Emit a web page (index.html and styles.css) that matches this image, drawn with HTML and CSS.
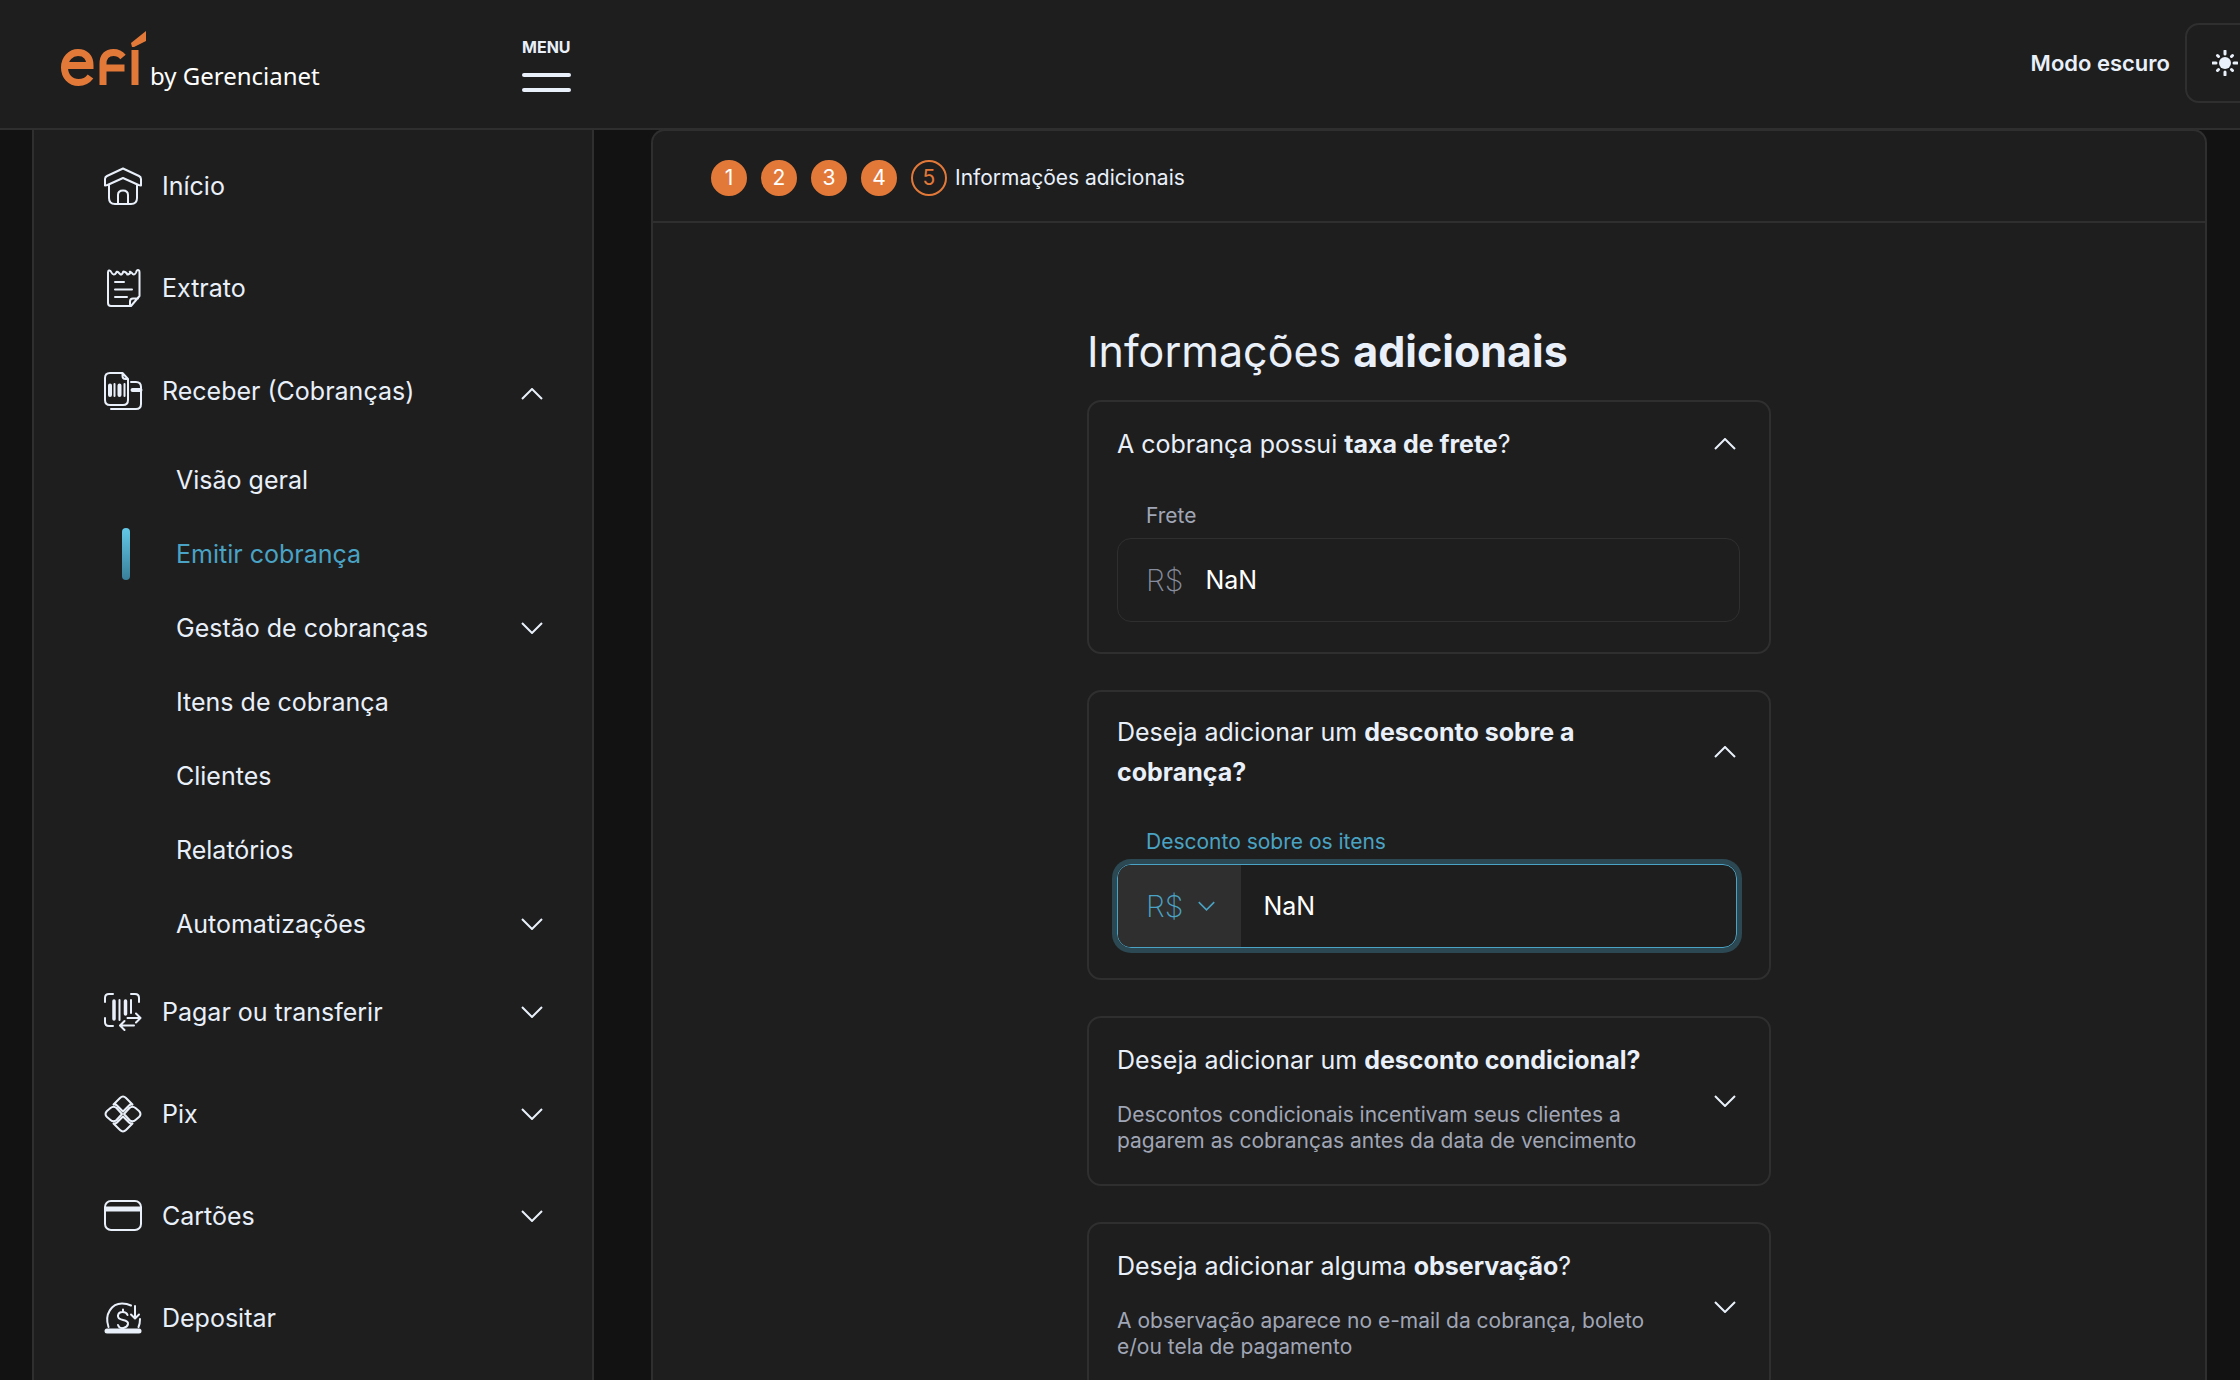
FILE: index.html
```html
<!DOCTYPE html>
<html lang="pt-BR">
<head>
<meta charset="utf-8">
<meta name="viewport" content="width=device-width, initial-scale=1">
<title>Emitir cobrança - Informações adicionais</title>
<link rel="stylesheet" href="styles.css">
</head>
<body>
<svg class="defs" aria-hidden="true">
  <symbol id="down" viewBox="0 0 22 12"><path d="M1 1l10 10L21 1" fill="none" stroke="currentColor" stroke-width="2"/></symbol>
  <symbol id="up" viewBox="0 0 22 12"><path d="M1 11L11 1l10 10" fill="none" stroke="currentColor" stroke-width="2"/></symbol>
</svg>
<div class="app">
  <header class="topbar">
    <a class="brand" href="#" aria-label="Efí by Gerencianet">
      <svg class="brand-mark" viewBox="0 0 86 56" aria-hidden="true">
        <g fill="none" stroke="#e37939" stroke-width="7">
          <path d="M3.500 34.500H29C29 26 24 21.500 17 21.500S3.500 27.500 3.500 36.500 9.500 51.500 17.500 51.500c5.500 0 9-2 12-6"/>
          <path d="M42 54V33c0-8 4-11.500 10.500-11.500 4.500 0 7 1.500 9.500 4.500M42 37h21.500M74 54V19"/>
        </g>
        <path fill="#e37939" d="M71 16 70 12 85 0V10L73 16Z"/>
      </svg>
      <span class="brand-text">by Gerencianet</span>
    </a>
    <button class="menu" type="button"><span>MENU</span><i></i><i></i></button>
    <div class="theme">
      <span id="theme-label">Modo escuro</span>
      <button class="theme-toggle" type="button" aria-labelledby="theme-label">
        <svg width="26" height="26" viewBox="0 0 26 26"><circle cx="13" cy="13" r="6" fill="currentColor"/><path d="M13 1v3M13 22v3M1 13h3M22 13h3M5.500 5.500l1 1M19.500 19.500l1 1M5.500 20.500l1-1M19.500 6.500l1-1" stroke="currentColor" stroke-width="3" stroke-linecap="round"/></svg>
      </button>
    </div>
  </header>

  <div class="body">
    <nav class="sidebar">
      <ul>
        <li><a class="item" href="#">
          <svg class="icon" viewBox="0 0 38 38"><path d="M19 1.500 35 9q2 1 2 3v6.500l-2.500-.5L19 11 3.500 18 1 18.500V12q0-2 2-3zM5 18v13q0 6 6 6h16q6 0 6-6V18M14 37V28q0-4.500 5-4.500t5 4.500v9"/></svg>
          <span>Início</span></a></li>
        <li><a class="item" href="#">
          <svg class="icon" viewBox="0 0 38 38"><path d="M5 1.500q1.500-.5 2.500 2C8.500 6 11 6 12 4q1-2 2-1t2 2 2 0 1-2 2 0 2 2 2 0 1-2 2 1c1 2 3 2 4-.5 .8-2.500 2-3 3-2 .500 .500 .500 1 .500 2v23.500L27 37H7q-3 0-3-3V3.500q0-1.500 1-2zM26 37v-4.500q0-3 3-3h5M11 13h9M11 20.500h17M11 28h12"/></svg>
          <span>Extrato</span></a></li>
        <li><button class="item" type="button" aria-expanded="true">
          <svg class="icon" viewBox="0 0 38 38"><path d="M18.500 1H6Q1 1 1 6v22q0 5 5 5h13q5 0 5-5V7zM18.500 1v3q0 3 3 3H24M27 10h5q5 0 5 5v17q0 5-5 5H7M10.500 12v12M20.500 12v12"/><path d="M6 13.500v9.500M15.500 13.500v9.500M28.500 18h8" stroke-width="4"/></svg>
          <span>Receber (Cobranças)</span><svg class="chev"><use href="#up"/></svg></button>
          <ul class="sub">
            <li><a href="#">Visão geral</a></li>
            <li><a class="active" href="#" aria-current="page">Emitir cobrança</a></li>
            <li><button type="button"><span>Gestão de cobranças</span><svg class="chev"><use href="#down"/></svg></button></li>
            <li><a href="#">Itens de cobrança</a></li>
            <li><a href="#">Clientes</a></li>
            <li><a href="#">Relatórios</a></li>
            <li><button type="button"><span>Automatizações</span><svg class="chev"><use href="#down"/></svg></button></li>
          </ul></li>
        <li><button class="item" type="button">
          <svg class="icon" viewBox="0 0 38 38"><path d="M1 9V5q0-4 4-4h4M27 1h4q4 0 4 4v4M1 25v4q0 4 4 4h4M15.500 7v20M27 7v13M23.500 25H36M32 20.500l4.500 4.500-4.500 4.500M30 32.500H17M20.500 28l-4.500 4.500 4.500 4.500"/><path d="M10 8v18M21.500 8v13" stroke-width="3.500"/></svg>
          <span>Pagar ou transferir</span><svg class="chev"><use href="#down"/></svg></button></li>
        <li><button class="item" type="button">
          <svg class="icon pix" viewBox="0 0 38 38"><path d="M9.500 9.500 16 3q3-3 6 0l6.500 6.500Q26.500 9 25 10.500L19 16.500l-6-6Q11.500 9 9.500 9.500zM9.500 28.500 16 35q3 3 6 0l6.500-6.500Q26.500 29 25 27.500L19 21.500l-6 6Q11.500 29 9.500 28.500zM18 19l-5.500-6q-3-2.500-6 0L3 16q-3 3 0 6l3.500 3q3 2.500 6 0zM20 19l5.500-6q3-2.500 6 0L35 16q3 3 0 6l-3.500 3q-3 2.500-6 0z"/></svg>
          <span>Pix</span><svg class="chev"><use href="#down"/></svg></button></li>
        <li><button class="item" type="button">
          <svg class="icon" viewBox="0 0 38 38"><rect x="1" y="4" width="36" height="29" rx="6"/><path d="M1 12h36" stroke-width="5" stroke-linecap="butt"/></svg>
          <span>Cartões</span><svg class="chev"><use href="#down"/></svg></button></li>
        <li><a class="item" href="#">
          <svg class="icon" viewBox="0 0 38 38"><path d="M4.500 28C0 15 8 4.500 18 4.500q5 0 9 2M36 20q0 5-1.500 8M31 7v12M27 15.500l4 4 4-4M23.500 16q-1-3-5-3t-4.500 3.500T19 21t5 4-4.500 4-5.500-3M19 10.500V13M19 29v2"/><path d="M3 32h32" stroke-width="5"/></svg>
          <span>Depositar</span></a></li>
      </ul>
    </nav>

    <main class="panel">
      <ol class="steps">
        <li class="done">1</li>
        <li class="done">2</li>
        <li class="done">3</li>
        <li class="done">4</li>
        <li class="current" aria-current="step">5</li>
        <li class="step-name">Informações adicionais</li>
      </ol>
      <form class="form">
        <h1>Informações <strong>adicionais</strong></h1>

        <section class="card">
          <button class="card-head" type="button" aria-expanded="true">
            <span class="card-text"><span class="question">A cobrança possui <strong>taxa de frete</strong>?</span></span>
            <svg class="chev"><use href="#up"/></svg>
          </button>
          <div class="card-body">
            <label for="frete">Frete</label>
            <div class="field">
              <span class="currency">R$</span>
              <input id="frete" type="text" value="NaN">
            </div>
          </div>
        </section>

        <section class="card">
          <button class="card-head" type="button" aria-expanded="true">
            <span class="card-text"><span class="question">Deseja adicionar um <strong>desconto sobre a cobrança?</strong></span></span>
            <svg class="chev"><use href="#up"/></svg>
          </button>
          <div class="card-body focused">
            <label for="desconto">Desconto sobre os itens</label>
            <div class="field">
              <button class="currency unit" type="button" aria-haspopup="listbox"><span>R$</span><svg class="chev small"><use href="#down"/></svg></button>
              <input id="desconto" type="text" value="NaN">
            </div>
          </div>
        </section>

        <section class="card">
          <button class="card-head closed" type="button" aria-expanded="false">
            <span class="card-text"><span class="question">Deseja adicionar um <strong>desconto condicional?</strong></span>
            <span class="hint">Descontos condicionais incentivam seus clientes a pagarem as cobranças antes da data de vencimento</span></span>
            <svg class="chev"><use href="#down"/></svg>
          </button>
        </section>

        <section class="card">
          <button class="card-head closed" type="button" aria-expanded="false">
            <span class="card-text"><span class="question">Deseja adicionar alguma <strong>observação</strong>?</span>
            <span class="hint">A observação aparece no e-mail da cobrança, boleto e/ou tela de pagamento</span></span>
            <svg class="chev"><use href="#down"/></svg>
          </button>
        </section>
      </form>
    </main>
  </div>
</div>
</body>
</html>
```
FILE: styles.css
```css
:root {
  --surface: #1e1e1e;
  --line: #2f2f2f;
  --text: #e9f0fa;
  --muted: #a0a6b6;
  --blue: #4aa3c4;
  --orange: #e37939;
}

* { box-sizing: border-box; }

body {
  margin: 0;
  background: #121212;
  color: var(--text);
  font: 25px/40px Inter, "Liberation Sans", sans-serif;
}

button, input { font: inherit; color: inherit; background: none; border: 0; padding: 0; margin: 0; }
button { text-align: left; cursor: pointer; }
a { color: inherit; text-decoration: none; }
ul, ol { list-style: none; margin: 0; padding: 0; }
strong { font-weight: 700; }

.defs { display: none; }
.app { display: flex; flex-direction: column; height: 100vh; overflow: hidden; }

/* top bar */
.topbar {
  display: flex;
  align-items: center;
  flex: none;
  height: 130px;
  padding: 0 0 2px 61px;
  background: var(--surface);
  border-bottom: 2px solid var(--line);
  overflow: hidden;
}
.brand { display: flex; align-items: flex-end; width: 461px; gap: 3px; padding-bottom: 8px; }
.brand-mark { width: 86px; height: 56px; flex: none; }
.brand-text { font: 24px/30px "Noto Sans", sans-serif; color: #fff; margin-bottom: -4px; }
.menu { display: flex; flex-direction: column; width: 49px; padding-top: 2px; }
.menu span { font-size: 16px; line-height: 20px; font-weight: 700; margin-bottom: 16px; }
.menu i { height: 4px; border-radius: 2px; background: var(--text); }
.menu i + i { margin-top: 11px; }
.theme {
  display: flex;
  align-items: center;
  gap: 15px;
  margin-left: auto;
  margin-right: -25px;
  font-size: 22px;
  font-weight: 600;
}
.theme-toggle {
  display: flex;
  align-items: center;
  justify-content: center;
  width: 80px;
  height: 80px;
  border: 2px solid var(--line);
  border-radius: 14px;
}

.body { display: flex; flex: 1; min-height: 0; padding: 0 33px 0 32px; gap: 57px; }

/* sidebar */
.sidebar {
  flex: none;
  width: 562px;
  padding: 5px 49px 0 70px;
  background: var(--surface);
  border: solid var(--line);
  border-width: 0 2px;
}
.item { display: flex; align-items: center; gap: 20px; width: 100%; height: 102px; }
.item[aria-expanded="true"] { height: 104px; }
.item[aria-expanded="true"] .chev { margin-top: 6px; }
.icon {
  width: 38px;
  height: 38px;
  flex: none;
  fill: none;
  stroke: currentColor;
  stroke-width: 2;
  stroke-linecap: round;
  stroke-linejoin: round;
  overflow: visible;
}
.chev { width: 22px; height: 12px; flex: none; margin-left: auto; }
.sub { padding-left: 72px; }
.sub a, .sub button { display: flex; align-items: center; width: 100%; height: 74px; }
.sub .active { position: relative; color: var(--blue); }
.sub .active::before {
  content: "";
  position: absolute;
  left: -54px;
  top: 11px;
  width: 8px;
  height: 52px;
  border-radius: 4px;
  background: linear-gradient(#63c8e8, #397f99);
}

/* panel */
.panel {
  flex: 1;
  min-width: 0;
  margin-top: -1px;
  background: var(--surface);
  border: 2px solid var(--line);
  border-bottom: 0;
  border-radius: 14px 14px 0 0;
  overflow: hidden;
}
.steps {
  display: flex;
  align-items: center;
  gap: 14px;
  height: 92px;
  padding: 4px 58px 0;
  border-bottom: 2px solid var(--line);
  font-size: 21px;
}
.steps li { flex: none; }
.done, .current {
  width: 36px;
  height: 36px;
  line-height: 32px;
  text-align: center;
  border: 2px solid var(--orange);
  border-radius: 50%;
}
.done { background: var(--orange); color: #fff; }
.current { color: var(--orange); }
.step-name { margin-left: -6px; }

.form { width: 684px; max-width: 100%; margin: 0 auto; padding-top: 102px; }
h1 { margin: 0 0 23px; font-size: 43px; line-height: 52px; font-weight: 400; }
.card { margin-bottom: 36px; border: 2px solid var(--line); border-radius: 14px; }
.card-head {
  display: flex;
  align-items: center;
  width: 100%;
  min-height: 84px;
  padding: 0 33px 0 28px;
}
.card-text { display: block; max-width: 552px; padding: 20px 0; }
.closed .card-text { padding: 22px 0 30px; }
.question, .hint { display: block; }
.hint { margin-top: 22px; font-size: 21px; line-height: 26px; color: var(--muted); }
.card-body { padding: 16px 29px 30px 28px; }
.card-body label {
  display: block;
  padding-left: 29px;
  margin-bottom: 8px;
  font-size: 21px;
  line-height: 28px;
  color: var(--muted);
}
.field {
  display: flex;
  height: 84px;
  border: 1px solid var(--line);
  border-radius: 14px;
}
.currency {
  display: flex;
  align-items: center;
  flex: none;
  padding-left: 28px;
  font-size: 30px;
  font-weight: 200;
  color: #868c9c;
}
.field input { flex: 1; min-width: 0; padding: 0 22px; color: #fff; outline: 0; }
.card-body.focused { padding-right: 32px; }
.focused label { color: var(--blue); }
.focused .field { border-color: var(--blue); box-shadow: 0 0 0 5px #2c4853; }
.unit { gap: 15px; padding-right: 26px; background: var(--line); color: var(--blue); border-radius: 13px 0 0 13px; }
.small { width: 17px; height: 10px; }
```
